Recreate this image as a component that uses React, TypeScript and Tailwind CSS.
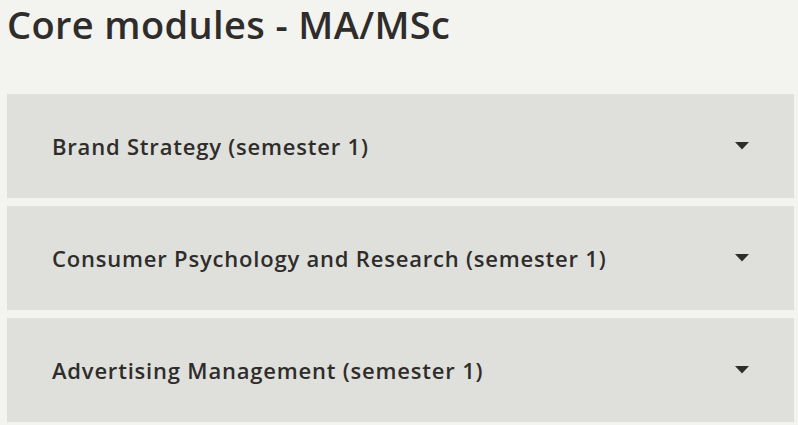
import React from "react";

const modules = [
  "Brand Strategy (semester 1)",
  "Consumer Psychology and Research (semester 1)",
  "Advertising Management (semester 1)",
];

export default function App() {
  return (
    <div
      className="min-h-screen bg-[#f3f3ef] pl-[7px] pr-[4px] text-[#2f2d2b]"
      style={{ fontFamily: '"Open Sans", "Noto Sans", sans-serif' }}
    >
      <h1 className="text-[38px] leading-[48px] font-semibold tracking-[0.01em]">
        Core modules - MA/MSc
      </h1>

      <div className="mt-[46px] flex flex-col gap-[8px]">
        {modules.map((name) => (
          <button
            key={name}
            type="button"
            className="flex h-[104px] w-full items-center justify-between bg-[#dfe0db] pl-[45px] pr-[45px] text-left"
          >
            <span className="text-[22px] font-semibold tracking-[0.8px]">{name}</span>
            <svg width="14" height="8" viewBox="0 0 14 8" className="shrink-0">
              <path d="M0 0h14L7 7.5z" fill="#2f2d2b" />
            </svg>
          </button>
        ))}
      </div>
    </div>
  );
}
